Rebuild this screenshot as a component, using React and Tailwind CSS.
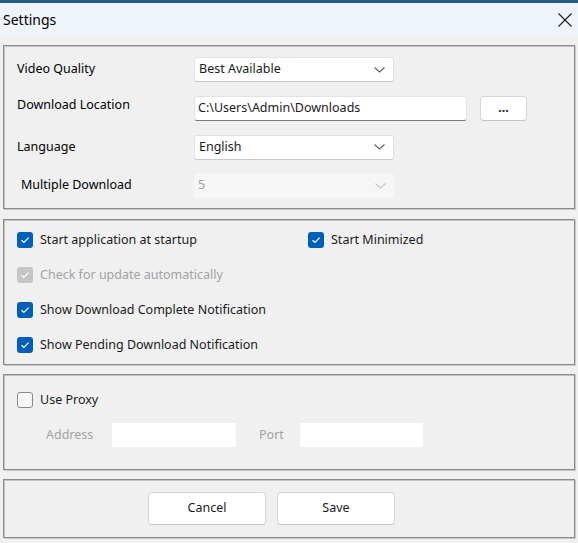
import React from "react";

const font = { fontFamily: '"Noto Sans", "Open Sans", sans-serif' };

function Chevron({ color = "#5f5f5f" }) {
  return (
    <svg width="11" height="6" viewBox="0 0 11 6" fill="none">
      <path d="M0.5 0.5 L5.5 5 L10.5 0.5" stroke={color} strokeWidth="1.1" />
    </svg>
  );
}

function Combo({ value, disabled }) {
  return (
    <div
      className={
        "w-[200px] h-[25px] rounded-[3px] flex items-center justify-between pl-[4px] pr-[8px] " +
        (disabled
          ? "bg-[#f6f6f6] text-[#a0a0a0]"
          : "bg-white text-[#1b1b1b] border border-[#e2e2e2] border-b-[#c8c8c8]")
      }
    >
      <span>{value}</span>
      <Chevron color={disabled ? "#c4c4c4" : "#5f5f5f"} />
    </div>
  );
}

function Check({ checked, disabled, label, className = "" }) {
  return (
    <div className={"flex items-center gap-[7px] " + className}>
      {checked ? (
        <div
          className={
            "w-[16px] h-[16px] rounded-[3px] flex items-center justify-center " +
            (disabled ? "bg-[#c5c5c5]" : "bg-[#005fb8]")
          }
        >
          <svg width="10" height="8" viewBox="0 0 10 8" fill="none">
            <path d="M1.5 4.2 L3.9 6.4 L8.6 1.6" stroke="white" strokeWidth="1.2" />
          </svg>
        </div>
      ) : (
        <div className="w-[16px] h-[16px] rounded-[3px] border border-[#8a8a8a] bg-[#f7f7f7]" />
      )}
      <span className={disabled ? "text-[#a3a3a3]" : "text-[#1b1b1b]"}>{label}</span>
    </div>
  );
}

function Group({ className = "", children }) {
  return (
    <div
      className={
        "border border-[#8c8c8c] shadow-[inset_1px_1px_0_#c2c2c2,1px_1px_0_#c8c8c8] " + className
      }
    >
      {children}
    </div>
  );
}

function Button({ children }) {
  return (
    <div className="h-[33px] w-[118px] bg-white border border-[#d6d6d6] border-b-[#c4c4c4] rounded-[4px] flex items-center justify-center text-[#1b1b1b]">
      {children}
    </div>
  );
}

export default function App() {
  return (
    <div className="w-[578px] h-[543px] bg-[#f0f0f0] overflow-hidden text-[12.5px]" style={font}>
      <div className="h-[3px] bg-[#245b87]" />
      <div className="h-[33px] bg-[#eff4f9] flex items-center justify-between pl-[3px] pr-[6px]">
        <span className="text-[14px] text-black">Settings</span>
        <svg width="14" height="14" viewBox="0 0 14 14" fill="none">
          <path d="M0.5 0.5 L13.5 13.5 M13.5 0.5 L0.5 13.5" stroke="#1b1b1b" strokeWidth="1.1" />
        </svg>
      </div>
      <div className="px-[3px] pt-[9px] flex flex-col">
        <Group className="h-[164px] pl-[13px] pt-[11px]">
          <div className="flex items-center h-[25px]">
            <span className="w-[177px] text-black">Video Quality</span>
            <Combo value="Best Available" />
          </div>
          <div className="flex items-center h-[25px] mt-[14px]">
            <span className="w-[177px] text-black -mt-[6px]">Download Location</span>
            <div className="w-[273px] h-[25px] bg-white border border-[#e2e2e2] border-b-[#7a7a7a] rounded-[3px] flex items-center pl-[3px] text-[#1b1b1b]">
              C:\Users\Admin\Downloads
            </div>
            <div className="ml-[13px] w-[47px] h-[25px] bg-white border border-[#d6d6d6] border-b-[#c4c4c4] rounded-[4px] flex items-center justify-center text-[#1b1b1b] font-bold -mt-[1px]">
              ...
            </div>
          </div>
          <div className="flex items-center h-[26px] mt-[13px]">
            <span className="w-[177px] text-black">Language</span>
            <Combo value="English" />
          </div>
          <div className="flex items-center h-[25px] mt-[13px]">
            <span className="w-[177px] pl-[4px] text-black">Multiple Download</span>
            <Combo value="5" disabled />
          </div>
        </Group>
        <Group className="h-[146px] mt-[10px] pl-[13px] pt-[12px]">
          <div className="flex h-[16px] items-center">
            <Check checked label="Start application at startup" className="w-[291px]" />
            <Check checked label="Start Minimized" />
          </div>
          <Check checked disabled label="Check for update automatically" className="mt-[19px] h-[16px]" />
          <Check checked label="Show Download Complete Notification" className="mt-[19px] h-[16px]" />
          <Check checked label="Show Pending Download Notification" className="mt-[19px] h-[16px]" />
        </Group>
        <Group className="h-[96px] mt-[9px] pl-[13px] pt-[17px]">
          <Check label="Use Proxy" className="h-[16px]" />
          <div className="flex items-center mt-[15px] h-[24px]">
            <span className="w-[66px] pl-[29px] text-[#a3a3a3] box-content">Address</span>
            <div className="w-[124px] h-[24px] bg-white ml-[0px]" />
            <span className="ml-[23px] w-[41px] text-[#a3a3a3]">Port</span>
            <div className="w-[123px] h-[24px] bg-white" />
          </div>
        </Group>
        <Group className="h-[59px] mt-[9px] flex items-center pl-[144px] gap-[11px]">
          <Button>Cancel</Button>
          <Button>Save</Button>
        </Group>
      </div>
    </div>
  );
}
